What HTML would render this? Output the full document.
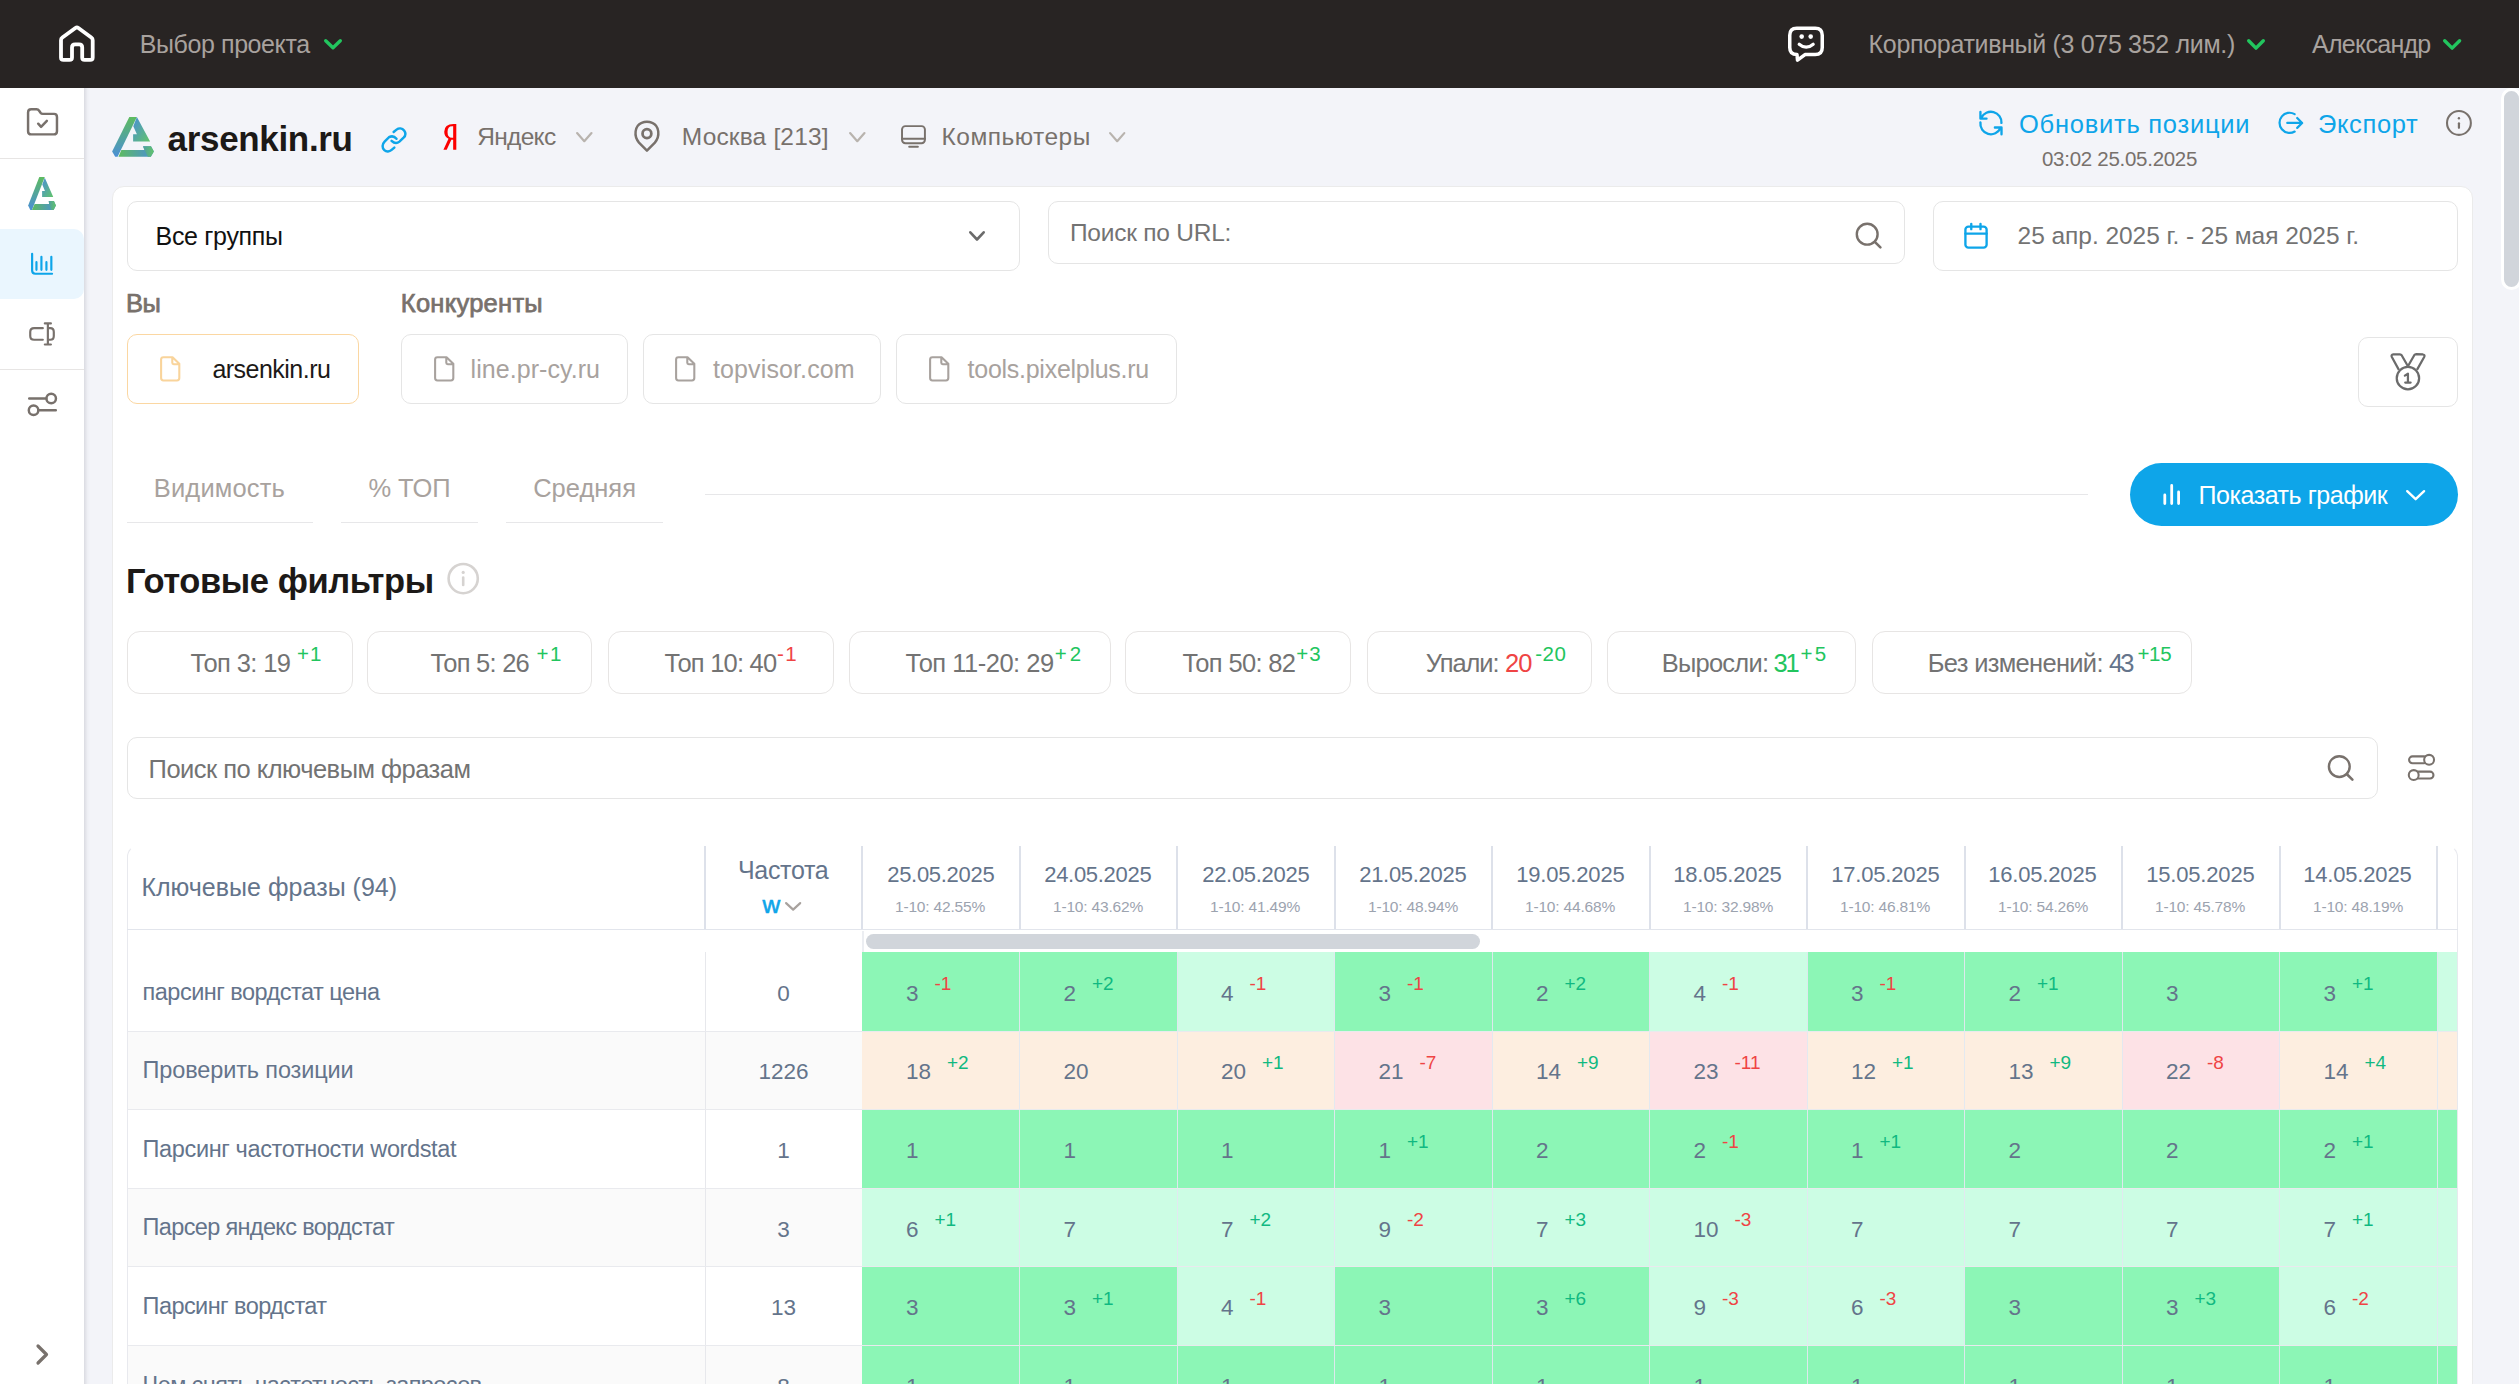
<!DOCTYPE html>
<html lang="ru"><head><meta charset="utf-8"><title>arsenkin.ru</title>
<style>
html,body{margin:0;padding:0;width:2519px;height:1384px;overflow:hidden;background:#f3f4f9}
body{position:relative;font-family:"Liberation Sans", sans-serif}
.t{position:absolute;white-space:pre;font-family:"Liberation Sans", sans-serif}
svg{overflow:visible}
</style></head><body>
<div style="position:absolute;left:0;top:0;width:2519px;height:1384px;overflow:hidden">
<div style="position:absolute;left:0px;top:0px;width:2519px;height:88px;background:#282423"></div>
<svg style="position:absolute;left:59px;top:25px;" width="36" height="37" viewBox="59 25 36 37"><path d="M72,57.5 V47.5 Q72,44.3 75.2,44.3 H79 Q82.2,44.3 82.2,47.5 V57.5 Q82.2,59.9 84.6,59.9 H90.2 Q92.7,59.9 92.7,57.4 V40.2 Q92.7,38.5 91.3,37.5 L78.4,28 Q76.9,27 75.4,28 L62.4,37.5 Q61,38.5 61,40.2 V57.4 Q61,59.9 63.5,59.9 H69.5 Q72,59.9 72,57.5 Z" fill="none" stroke="#fff" stroke-width="3.8" stroke-linejoin="round"/></svg>
<div id="tb_proj" class="t" style="left:139.80px;top:31.75px;font-size:25px;line-height:25px;color:#a8a29e;font-weight:400;letter-spacing:-0.417px;">Выбор проекта</div>
<svg style="position:absolute;left:322px;top:37px;" width="22" height="14.399999999999999" viewBox="322 37 22 14.399999999999999"><path d="M325.7,40.7 L333.0,47.699999999999996 L340.3,40.7" fill="none" stroke="#22c55e" stroke-width="3.4" stroke-linecap="round" stroke-linejoin="round"/></svg>
<svg style="position:absolute;left:1786px;top:24px;" width="40" height="40" viewBox="1786 24 40 40"><path d="M1797,54.6 Q1789.75,54.6 1789.75,47.6 V35.2 Q1789.75,28.2 1796.75,28.2 H1815.25 Q1822.25,28.2 1822.25,35.2 V47.6 Q1822.25,54.6 1815.25,54.6 H1805 L1797.5,60.2 Z" fill="none" stroke="#fff" stroke-width="3.5" stroke-linejoin="round"/><circle cx="1801.7" cy="36.6" r="2.3" fill="#fff"/><circle cx="1810.7" cy="36.6" r="2.3" fill="#fff"/><path d="M1799.2,44.2 Q1806.2,50.2 1813.2,44.2" fill="none" stroke="#fff" stroke-width="3.2" stroke-linecap="round"/></svg>
<div id="tb_corp" class="t" style="left:1868.60px;top:31.75px;font-size:25px;line-height:25px;color:#a8a29e;font-weight:400;letter-spacing:-0.322px;">Корпоративный (3 075 352 лим.)</div>
<svg style="position:absolute;left:2245px;top:36.6px;" width="22" height="14.799999999999997" viewBox="2245 36.6 22 14.799999999999997"><path d="M2248.7,40.300000000000004 L2256.0,47.699999999999996 L2263.3,40.300000000000004" fill="none" stroke="#22c55e" stroke-width="3.4" stroke-linecap="round" stroke-linejoin="round"/></svg>
<div id="tb_user" class="t" style="left:2312.00px;top:31.75px;font-size:25px;line-height:25px;color:#a8a29e;font-weight:400;letter-spacing:-0.734px;">Александр</div>
<svg style="position:absolute;left:2440.7px;top:36.6px;" width="22.300000000000182" height="14.799999999999997" viewBox="2440.7 36.6 22.300000000000182 14.799999999999997"><path d="M2444.3999999999996,40.300000000000004 L2451.85,47.699999999999996 L2459.3,40.300000000000004" fill="none" stroke="#22c55e" stroke-width="3.4" stroke-linecap="round" stroke-linejoin="round"/></svg>
<div style="position:absolute;left:0px;top:88px;width:2519px;height:1296px;background:#f3f4f9"></div>
<div style="position:absolute;left:84px;top:88px;width:6px;height:1296px;background:linear-gradient(to right, rgba(0,0,20,0.10), rgba(0,0,20,0.02) 60%, rgba(0,0,0,0))"></div>
<div style="position:absolute;left:0px;top:88px;width:84px;height:1296px;background:#fff"></div>
<div style="position:absolute;left:0px;top:158px;width:84px;height:1px;background:#e7e5e4"></div>
<div style="position:absolute;left:0px;top:369px;width:84px;height:1px;background:#e7e5e4"></div>
<div style="position:absolute;left:-10px;top:229px;width:94px;height:70px;background:#eaf6fe;border-radius:10px"></div>
<svg style="position:absolute;left:22px;top:100px;" width="40" height="40" viewBox="0 0 1384 1384"><path d="M210,430 Q210,320 320,320 H500 Q560,320 600,380 L640,440 Q670,480 720,480 H1110 Q1210,480 1210,590 V1080 Q1210,1190 1100,1190 H320 Q210,1190 210,1080 Z" fill="none" stroke="#78716c" stroke-width="85" stroke-linejoin="round"/><path d="M560,820 L660,930 L860,720" fill="none" stroke="#78716c" stroke-width="85" stroke-linecap="round" stroke-linejoin="round"/></svg>
<svg style="position:absolute;left:22px;top:170px;" width="40" height="46" viewBox="0 0 1203 1384"><defs>
<linearGradient id="sg1" x1="0" y1="0" x2="0" y2="1"><stop offset="0" stop-color="#5dbb5f"/><stop offset="1" stop-color="#4a8fd6"/></linearGradient>
<linearGradient id="sg2" x1="0" y1="0" x2="1" y2="1"><stop offset="0" stop-color="#4a8fd6"/><stop offset="1" stop-color="#62c46a"/></linearGradient>
<linearGradient id="sg3" x1="0" y1="0" x2="1" y2="0"><stop offset="0" stop-color="#5dbb5f"/><stop offset="1" stop-color="#4a8fd6"/></linearGradient>
<linearGradient id="sg4" x1="0" y1="0" x2="1" y2="0"><stop offset="0" stop-color="#4f9fa0"/><stop offset="1" stop-color="#62c46a"/></linearGradient>
</defs><path d="M520,210 L685,210 L300,1200 L250,1200 L185,1070 Z" fill="url(#sg1)"/><path d="M685,230 L940,810 L605,810 L605,635 L690,635 L610,440 Z" fill="url(#sg2)"/><path d="M380,1020 L815,1020 L805,935 L960,935 L1020,1070 L950,1200 L300,1200 Z" fill="url(#sg3)"/><path d="M815,1020 L805,935 L960,935 L1020,1070 L950,1200 L880,1200 Z" fill="url(#sg4)"/></svg>
<svg style="position:absolute;left:22px;top:244px;" width="40" height="40" viewBox="0 0 1384 1384"><path d="M350,340 V920 Q350,1030 460,1030 H1040" fill="none" stroke="#0ea5e9" stroke-width="75" stroke-linecap="round"/><path d="M500,630 V895 M672,440 V895 M845,630 V895 M1015,440 V895" fill="none" stroke="#0ea5e9" stroke-width="75" stroke-linecap="round"/></svg>
<svg style="position:absolute;left:22px;top:314px;" width="40" height="40" viewBox="0 0 1384 1384"><path d="M720,490 H420 Q285,490 285,620 V760 Q285,890 420,890 H720 M910,490 H980 Q1100,490 1100,620 V760 Q1100,890 980,890 H910 M790,325 H1000 M895,325 V1055 M790,1055 H1000" fill="none" stroke="#78716c" stroke-width="75" stroke-linecap="round"/></svg>
<svg style="position:absolute;left:22px;top:384px;" width="40" height="40" viewBox="0 0 1384 1384"><path d="M250,500 H840 M570,910 H1170" fill="none" stroke="#78716c" stroke-width="85" stroke-linecap="round"/><circle cx="1010" cy="500" r="165" fill="none" stroke="#78716c" stroke-width="85"/><circle cx="400" cy="910" r="165" fill="none" stroke="#78716c" stroke-width="85"/></svg>
<svg style="position:absolute;left:30px;top:1338px;" width="24" height="34" viewBox="30 1338 24 34"><path d="M38,1346 L46.5,1354.5 L38,1363" fill="none" stroke="#78716c" stroke-width="3.2" stroke-linecap="round" stroke-linejoin="round"/></svg>
<div style="position:absolute;left:2501px;top:88px;width:21px;height:202px;background:#d1d5db;border-radius:11px;border:3px solid #fff;box-sizing:border-box"></div>
<svg style="position:absolute;left:108px;top:112px;" width="50" height="50" viewBox="0 0 1384 1384"><defs>
<linearGradient id="hg1" x1="0" y1="0" x2="0" y2="1"><stop offset="0" stop-color="#5dbb5f"/><stop offset="1" stop-color="#4a8fd6"/></linearGradient>
<linearGradient id="hg2" x1="0" y1="0" x2="1" y2="1"><stop offset="0" stop-color="#4a8fd6"/><stop offset="1" stop-color="#62c46a"/></linearGradient>
<linearGradient id="hg3" x1="0" y1="0" x2="1" y2="0"><stop offset="0" stop-color="#5dbb5f"/><stop offset="1" stop-color="#4a8fd6"/></linearGradient>
<linearGradient id="hg4" x1="0" y1="0" x2="1" y2="0"><stop offset="0" stop-color="#4f9fa0"/><stop offset="1" stop-color="#62c46a"/></linearGradient>
</defs><path d="M590,135 L800,135 L265,1240 L200,1240 L115,1090 Z" fill="url(#hg1)"/><path d="M800,140 L1165,820 L695,820 L695,615 L800,615 L700,395 Z" fill="url(#hg2)"/><path d="M370,1050 L1010,1050 L970,945 L1190,945 L1270,1090 L1185,1240 L290,1240 Z" fill="url(#hg3)"/><path d="M1010,1050 L970,945 L1190,945 L1270,1090 L1185,1240 L1100,1240 Z" fill="url(#hg4)"/></svg>
<div id="h_site" class="t" style="left:167.60px;top:120.85px;font-size:35px;line-height:35px;color:#1c1917;font-weight:700;letter-spacing:-0.330px;">arsenkin.ru</div>
<svg style="position:absolute;left:376px;top:120px;" width="36" height="36" viewBox="0 0 1384 1384"><path d="M678,462 L790,370 C880,300 1010,310 1080,400 C1150,490 1140,600 1060,680 L900,830 C820,900 700,900 598,800 M788,720 C720,640 600,610 500,660 L330,830 C230,930 230,1080 320,1160 C400,1230 520,1220 600,1150 L705,1060" fill="none" stroke="#0ea5e9" stroke-width="95" stroke-linecap="round"/></svg>
<svg style="position:absolute;left:436px;top:118px;" width="30" height="38" viewBox="0 0 1093 1384"><path fill-rule="evenodd" d="M640,215 H740 V1160 H625 V790 H560 L390,1160 H270 L455,760 Q300,680 300,500 Q300,215 640,215 Z M625,300 H585 Q420,300 420,510 Q420,720 585,720 H625 Z" fill="#fc0000"/></svg>
<div id="h_yan" class="t" style="left:477.20px;top:124.98px;font-size:24.5px;line-height:24.5px;color:#78716c;font-weight:400;letter-spacing:-0.680px;">Яндекс</div>
<svg style="position:absolute;left:573.8px;top:130px;" width="20.600000000000023" height="14.300000000000011" viewBox="573.8 130 20.600000000000023 14.300000000000011"><path d="M576.9,133.1 L584.0999999999999,141.20000000000002 L591.3,133.1" fill="none" stroke="#b8b3ae" stroke-width="2.2" stroke-linecap="round" stroke-linejoin="round"/></svg>
<svg style="position:absolute;left:628px;top:116px;" width="40" height="40" viewBox="0 0 1384 1384"><path d="M655,1200 L380,920 C190,700 230,340 470,240 C590,185 720,185 840,240 C1080,340 1120,700 930,920 Z" fill="none" stroke="#78716c" stroke-width="85" stroke-linejoin="round"/><circle cx="655" cy="610" r="152" fill="none" stroke="#78716c" stroke-width="95"/></svg>
<div id="h_city" class="t" style="left:681.80px;top:124.98px;font-size:24.5px;line-height:24.5px;color:#78716c;font-weight:400;letter-spacing:0.161px;">Москва [213]</div>
<svg style="position:absolute;left:846.7px;top:130px;" width="20.59999999999991" height="14.300000000000011" viewBox="846.7 130 20.59999999999991 14.300000000000011"><path d="M849.8000000000001,133.1 L857.0,141.20000000000002 L864.1999999999999,133.1" fill="none" stroke="#b8b3ae" stroke-width="2.2" stroke-linecap="round" stroke-linejoin="round"/></svg>
<svg style="position:absolute;left:895px;top:116px;" width="36" height="36" viewBox="0 0 1384 1384"><rect x="270" y="390" width="880" height="655" rx="130" fill="none" stroke="#78716c" stroke-width="75"/><path d="M270,875 H1150 M545,1185 H880" fill="none" stroke="#78716c" stroke-width="75" stroke-linecap="round"/></svg>
<div id="h_dev" class="t" style="left:941.60px;top:124.98px;font-size:24.5px;line-height:24.5px;color:#78716c;font-weight:400;letter-spacing:0.478px;">Компьютеры</div>
<svg style="position:absolute;left:1106.8px;top:130px;" width="20.40000000000009" height="14.300000000000011" viewBox="1106.8 130 20.40000000000009 14.300000000000011"><path d="M1109.8999999999999,133.1 L1117.0,141.20000000000002 L1124.1000000000001,133.1" fill="none" stroke="#b8b3ae" stroke-width="2.2" stroke-linecap="round" stroke-linejoin="round"/></svg>
<svg style="position:absolute;left:1974px;top:106px;" width="34" height="34" viewBox="0 0 1384 1384"><path d="M1118,690 A430,430 0 0 0 300,480 M262,240 V512 H510 M262,670 A430,430 0 0 0 1080,900 M850,875 H1120 V1150" fill="none" stroke="#0ea5e9" stroke-width="95" stroke-linecap="round" stroke-linejoin="round"/></svg>
<div id="h_upd" class="t" style="left:2019.00px;top:111.92px;font-size:25.5px;line-height:25.5px;color:#0ea5e9;font-weight:400;letter-spacing:0.752px;">Обновить позиции</div>
<svg style="position:absolute;left:2274px;top:106px;" width="34" height="34" viewBox="0 0 1384 1384"><path d="M840,330 A410,410 0 1 0 840,1040 M540,690 H1140 M945,490 L1145,690 L945,890" fill="none" stroke="#0ea5e9" stroke-width="90" stroke-linecap="round" stroke-linejoin="round"/></svg>
<div id="h_exp" class="t" style="left:2318.00px;top:111.92px;font-size:25.5px;line-height:25.5px;color:#0ea5e9;font-weight:400;letter-spacing:0.651px;">Экспорт</div>
<svg style="position:absolute;left:2441px;top:106px;" width="34" height="34" viewBox="0 0 1384 1384"><circle cx="730" cy="690" r="485" fill="none" stroke="#78716c" stroke-width="85"/><circle cx="730" cy="500" r="48" fill="#78716c"/><path d="M730,705 V890" stroke="#78716c" stroke-width="90" stroke-linecap="round"/></svg>
<div id="h_time" class="t" style="left:2042.00px;top:149.38px;font-size:20.5px;line-height:20.5px;color:#78716c;font-weight:400;letter-spacing:-0.280px;">03:02 25.05.2025</div>
<div style="position:absolute;left:112px;top:186px;width:2361px;height:1314px;background:#fff;border:1.5px solid #ebebeb;border-radius:12px;box-sizing:border-box"></div>
<div style="position:absolute;left:127px;top:201px;width:893px;height:70px;border:1.5px solid #e5e5e5;border-radius:10px;box-sizing:border-box"></div>
<div id="c_groups" class="t" style="left:155.60px;top:224.15px;font-size:25px;line-height:25px;color:#111111;font-weight:400;letter-spacing:-0.324px;">Все группы</div>
<svg style="position:absolute;left:967px;top:229px;" width="20" height="13.800000000000011" viewBox="967 229 20 13.800000000000011"><path d="M970.3,232.3 L977.0,239.5 L983.7,232.3" fill="none" stroke="#6b6b6b" stroke-width="2.6" stroke-linecap="round" stroke-linejoin="round"/></svg>
<div style="position:absolute;left:1048px;top:201px;width:857px;height:63px;border:1.5px solid #e5e5e5;border-radius:10px;box-sizing:border-box"></div>
<div id="c_url" class="t" style="left:1070.00px;top:221.18px;font-size:24.5px;line-height:24.5px;color:#737373;font-weight:400;letter-spacing:-0.241px;">Поиск по URL:</div>
<svg style="position:absolute;left:1850px;top:218px;" width="36" height="36" viewBox="1850 218 36 36"><circle cx="1867.2" cy="234.2" r="10.4" fill="none" stroke="#78716c" stroke-width="2.4"/><path d="M1874.8,241.8 L1880.4,247.4" stroke="#78716c" stroke-width="2.6" stroke-linecap="round"/></svg>
<div style="position:absolute;left:1933px;top:201px;width:525px;height:70px;border:1.5px solid #e5e5e5;border-radius:10px;box-sizing:border-box"></div>
<svg style="position:absolute;left:1958px;top:218px;" width="36" height="36" viewBox="0 0 1384 1384"><rect x="285" y="330" width="815" height="810" rx="115" fill="none" stroke="#0ea5e9" stroke-width="90"/><path d="M285,600 H1100 M510,225 V430 M865,225 V430" fill="none" stroke="#0ea5e9" stroke-width="90" stroke-linecap="round"/></svg>
<div id="c_date" class="t" style="left:2017.60px;top:224.18px;font-size:24.5px;line-height:24.5px;color:#737373;font-weight:400;letter-spacing:-0.043px;">25 апр. 2025 г. - 25 мая 2025 г.</div>
<div id="c_you" class="t" style="left:126.00px;top:290.93px;font-size:25.5px;line-height:25.5px;color:#78716c;font-weight:400;letter-spacing:-0.600px;-webkit-text-stroke:0.75px #78716c">Вы</div>
<div id="c_comp" class="t" style="left:400.80px;top:290.93px;font-size:25.5px;line-height:25.5px;color:#78716c;font-weight:400;letter-spacing:0.267px;-webkit-text-stroke:0.75px #78716c">Конкуренты</div>
<div style="position:absolute;left:127px;top:334px;width:232px;height:70px;border:1.5px solid #fbd7a2;border-radius:10px;box-sizing:border-box"></div>
<svg style="position:absolute;left:152px;top:350px;" width="36" height="36" viewBox="0 0 1384 1384"><path d="M350,370 Q350,280 440,280 H790 L1050,530 V1080 Q1050,1170 960,1170 H440 Q350,1170 350,1080 Z M780,290 V490 Q780,545 835,545 H1040" fill="none" stroke="#f9d49b" stroke-width="80" stroke-linejoin="round"/></svg>
<div id="c_chip0" class="t" style="left:212.40px;top:356.55px;font-size:25px;line-height:25px;color:#1c1917;font-weight:400;letter-spacing:-0.520px;">arsenkin.ru</div>
<div style="position:absolute;left:401px;top:334px;width:227px;height:70px;border:1.5px solid #e5e5e5;border-radius:10px;box-sizing:border-box"></div>
<svg style="position:absolute;left:426px;top:350px;" width="36" height="36" viewBox="0 0 1384 1384"><path d="M350,370 Q350,280 440,280 H790 L1050,530 V1080 Q1050,1170 960,1170 H440 Q350,1170 350,1080 Z M780,290 V490 Q780,545 835,545 H1040" fill="none" stroke="#a8a29e" stroke-width="80" stroke-linejoin="round"/></svg>
<div id="c_chip1" class="t" style="left:470.60px;top:356.55px;font-size:25px;line-height:25px;color:#a8a29e;font-weight:400;letter-spacing:0.049px;">line.pr-cy.ru</div>
<div style="position:absolute;left:642.6px;top:334px;width:238.69999999999993px;height:70px;border:1.5px solid #e5e5e5;border-radius:10px;box-sizing:border-box"></div>
<svg style="position:absolute;left:667.3px;top:350px;" width="36" height="36" viewBox="0 0 1384 1384"><path d="M350,370 Q350,280 440,280 H790 L1050,530 V1080 Q1050,1170 960,1170 H440 Q350,1170 350,1080 Z M780,290 V490 Q780,545 835,545 H1040" fill="none" stroke="#a8a29e" stroke-width="80" stroke-linejoin="round"/></svg>
<div id="c_chip2" class="t" style="left:713.00px;top:356.55px;font-size:25px;line-height:25px;color:#a8a29e;font-weight:400;letter-spacing:0.119px;">topvisor.com</div>
<div style="position:absolute;left:896.3px;top:334px;width:281.0px;height:70px;border:1.5px solid #e5e5e5;border-radius:10px;box-sizing:border-box"></div>
<svg style="position:absolute;left:921.3px;top:350px;" width="36" height="36" viewBox="0 0 1384 1384"><path d="M350,370 Q350,280 440,280 H790 L1050,530 V1080 Q1050,1170 960,1170 H440 Q350,1170 350,1080 Z M780,290 V490 Q780,545 835,545 H1040" fill="none" stroke="#a8a29e" stroke-width="80" stroke-linejoin="round"/></svg>
<div id="c_chip3" class="t" style="left:967.60px;top:356.55px;font-size:25px;line-height:25px;color:#a8a29e;font-weight:400;letter-spacing:-0.270px;">tools.pixelplus.ru</div>
<div style="position:absolute;left:2358px;top:337px;width:100px;height:70px;border:1.5px solid #e5e5e5;border-radius:10px;box-sizing:border-box"></div>
<svg style="position:absolute;left:2383px;top:346px;" width="50" height="50" viewBox="0 0 1384 1384"><circle cx="690" cy="890" r="310" fill="none" stroke="#6b6b6b" stroke-width="62"/><path d="M440,660 L245,305 Q215,240 285,235 L470,230 Q500,230 520,262 L690,560 L865,255 Q885,225 920,225 L1105,235 Q1170,245 1140,305 L940,660" fill="none" stroke="#6b6b6b" stroke-width="62" stroke-linejoin="round"/><path d="M605,820 L690,765 V1010 M615,1012 H765" fill="none" stroke="#6b6b6b" stroke-width="62" stroke-linecap="round" stroke-linejoin="round"/></svg>
<div id="tab0" class="t" style="left:153.80px;top:475.52px;font-size:25.5px;line-height:25.5px;color:#a8a29e;font-weight:400;letter-spacing:0.150px;">Видимость</div>
<div id="tab1" class="t" style="left:368.40px;top:475.52px;font-size:25.5px;line-height:25.5px;color:#a8a29e;font-weight:400;letter-spacing:-0.050px;">% ТОП</div>
<div id="tab2" class="t" style="left:533.20px;top:475.52px;font-size:25.5px;line-height:25.5px;color:#a8a29e;font-weight:400;letter-spacing:0.000px;">Средняя</div>
<div style="position:absolute;left:127px;top:521.5px;width:186px;height:1.5px;background:#e7e7e9"></div>
<div style="position:absolute;left:341px;top:521.5px;width:137px;height:1.5px;background:#e7e7e9"></div>
<div style="position:absolute;left:506px;top:521.5px;width:157px;height:1.5px;background:#e7e7e9"></div>
<div style="position:absolute;left:705px;top:493.5px;width:1383px;height:1.5px;background:#e7e7e9"></div>
<div style="position:absolute;left:2130px;top:463px;width:328px;height:63px;background:#0ea5e9;border-radius:32px"></div>
<svg style="position:absolute;left:2158px;top:478px;" width="28" height="32" viewBox="2158 478 28 32"><path d="M2164.8,495 V503.5 M2171.7,485.5 V503.5 M2178.6,492 V503.5" stroke="#fff" stroke-width="2.8" stroke-linecap="round"/></svg>
<div id="btn_chart" class="t" style="left:2198.60px;top:482.75px;font-size:25px;line-height:25px;color:#ffffff;font-weight:400;letter-spacing:-0.464px;">Показать график</div>
<svg style="position:absolute;left:2404px;top:487.6px;" width="23.300000000000182" height="14.399999999999977" viewBox="2404 487.6 23.300000000000182 14.399999999999977"><path d="M2407.2,490.8 L2415.65,498.8 L2424.1000000000004,490.8" fill="none" stroke="#ffffff" stroke-width="2.4" stroke-linecap="round" stroke-linejoin="round"/></svg>
<div id="h_filters" class="t" style="left:126.00px;top:563.67px;font-size:34.5px;line-height:34.5px;color:#1c1917;font-weight:700;letter-spacing:-0.407px;">Готовые фильтры</div>
<svg style="position:absolute;left:442px;top:558px;" width="42" height="42" viewBox="442 558 42 42"><circle cx="463.2" cy="578.6" r="14.6" fill="none" stroke="#d6d3d1" stroke-width="2.6"/><circle cx="463.2" cy="572.4" r="1.6" fill="#d6d3d1"/><path d="M463.2,577.5 V585" stroke="#d6d3d1" stroke-width="2.6" stroke-linecap="round"/></svg>
<div style="position:absolute;left:127px;top:631px;width:225.5px;height:63px;border:1.5px solid #e7e5e4;border-radius:13px;box-sizing:border-box"></div>
<div style="position:absolute;left:367.4px;top:631px;width:224.80000000000007px;height:63px;border:1.5px solid #e7e5e4;border-radius:13px;box-sizing:border-box"></div>
<div style="position:absolute;left:607.5px;top:631px;width:226.10000000000002px;height:63px;border:1.5px solid #e7e5e4;border-radius:13px;box-sizing:border-box"></div>
<div style="position:absolute;left:848.5px;top:631px;width:262.20000000000005px;height:63px;border:1.5px solid #e7e5e4;border-radius:13px;box-sizing:border-box"></div>
<div style="position:absolute;left:1125.3px;top:631px;width:226.10000000000014px;height:63px;border:1.5px solid #e7e5e4;border-radius:13px;box-sizing:border-box"></div>
<div style="position:absolute;left:1366.5px;top:631px;width:225.29999999999995px;height:63px;border:1.5px solid #e7e5e4;border-radius:13px;box-sizing:border-box"></div>
<div style="position:absolute;left:1606.6px;top:631px;width:249.9000000000001px;height:63px;border:1.5px solid #e7e5e4;border-radius:13px;box-sizing:border-box"></div>
<div style="position:absolute;left:1871.8px;top:631px;width:320.29999999999995px;height:63px;border:1.5px solid #e7e5e4;border-radius:13px;box-sizing:border-box"></div>
<div id="f0" class="t" style="left:190.60px;top:650.62px;font-size:25.5px;line-height:25.5px;color:#737373;font-weight:400;letter-spacing:-0.625px;">Топ 3: 19</div>
<div id="f0s" class="t" style="left:297.00px;top:643.78px;font-size:20.5px;line-height:20.5px;color:#22c55e;font-weight:400;letter-spacing:1.000px;">+1</div>
<div id="f1" class="t" style="left:430.40px;top:650.62px;font-size:25.5px;line-height:25.5px;color:#737373;font-weight:400;letter-spacing:-0.750px;">Топ 5: 26</div>
<div id="f1s" class="t" style="left:536.60px;top:643.78px;font-size:20.5px;line-height:20.5px;color:#22c55e;font-weight:400;letter-spacing:1.500px;">+1</div>
<div id="f2" class="t" style="left:664.60px;top:650.62px;font-size:25.5px;line-height:25.5px;color:#737373;font-weight:400;letter-spacing:-0.777px;">Топ 10: 40</div>
<div id="f2s" class="t" style="left:777.00px;top:643.78px;font-size:20.5px;line-height:20.5px;color:#ef4444;font-weight:400;letter-spacing:1.500px;">-1</div>
<div id="f3" class="t" style="left:905.60px;top:650.62px;font-size:25.5px;line-height:25.5px;color:#737373;font-weight:400;letter-spacing:-0.499px;">Топ 11-20: 29</div>
<div id="f3s" class="t" style="left:1054.80px;top:643.78px;font-size:20.5px;line-height:20.5px;color:#22c55e;font-weight:400;letter-spacing:3.000px;">+2</div>
<div id="f4" class="t" style="left:1182.40px;top:650.62px;font-size:25.5px;line-height:25.5px;color:#737373;font-weight:400;letter-spacing:-0.667px;">Топ 50: 82</div>
<div id="f4s" class="t" style="left:1296.20px;top:643.78px;font-size:20.5px;line-height:20.5px;color:#22c55e;font-weight:400;letter-spacing:1.000px;">+3</div>
<div id="f5" class="t" style="left:1425.80px;top:650.62px;font-size:25.5px;line-height:25.5px;color:#737373;font-weight:400;letter-spacing:-1.100px;">Упали:</div>
<div id="f5n" class="t" style="left:1505.00px;top:650.62px;font-size:25.5px;line-height:25.5px;color:#ef4444;font-weight:400;letter-spacing:-1.000px;">20</div>
<div id="f5s" class="t" style="left:1535.20px;top:643.78px;font-size:20.5px;line-height:20.5px;color:#22c55e;font-weight:400;letter-spacing:0.500px;">-20</div>
<div id="f6" class="t" style="left:1661.80px;top:650.62px;font-size:25.5px;line-height:25.5px;color:#737373;font-weight:400;letter-spacing:-0.785px;">Выросли:</div>
<div id="f6n" class="t" style="left:1773.40px;top:650.62px;font-size:25.5px;line-height:25.5px;color:#22c55e;font-weight:400;letter-spacing:-2.000px;">31</div>
<div id="f6s" class="t" style="left:1800.40px;top:643.78px;font-size:20.5px;line-height:20.5px;color:#22c55e;font-weight:400;letter-spacing:2.500px;">+5</div>
<div id="f7" class="t" style="left:1927.80px;top:650.62px;font-size:25.5px;line-height:25.5px;color:#737373;font-weight:400;letter-spacing:-0.693px;">Без изменений:</div>
<div id="f7n" class="t" style="left:2109.00px;top:650.62px;font-size:25.5px;line-height:25.5px;color:#64748b;font-weight:400;letter-spacing:-3.000px;">43</div>
<div id="f7s" class="t" style="left:2137.40px;top:643.78px;font-size:20.5px;line-height:20.5px;color:#22c55e;font-weight:400;letter-spacing:-0.250px;">+15</div>
<div style="position:absolute;left:127px;top:736.5px;width:2250.5px;height:62.5px;border:1.5px solid #e5e5e5;border-radius:10px;box-sizing:border-box"></div>
<div id="kw_search" class="t" style="left:148.60px;top:756.83px;font-size:25.5px;line-height:25.5px;color:#737373;font-weight:400;letter-spacing:-0.511px;">Поиск по ключевым фразам</div>
<svg style="position:absolute;left:2322px;top:750px;" width="36" height="36" viewBox="2322 750 36 36"><circle cx="2339.3" cy="766.6" r="10.4" fill="none" stroke="#78716c" stroke-width="2.4"/><path d="M2346.9,774.2 L2352.4,779.6" stroke="#78716c" stroke-width="2.6" stroke-linecap="round"/></svg>
<svg style="position:absolute;left:2400px;top:748px;" width="42" height="38" viewBox="0 0 1530 1384"><rect x="330" y="305" width="660" height="250" rx="125" fill="none" stroke="#78716c" stroke-width="75"/><circle cx="1060" cy="430" r="180" fill="#fff" stroke="#78716c" stroke-width="75"/><rect x="540" y="860" width="680" height="250" rx="125" fill="none" stroke="#78716c" stroke-width="75"/><circle cx="500" cy="985" r="180" fill="#fff" stroke="#78716c" stroke-width="75"/></svg>
<div style="position:absolute;left:126.75px;top:845px;width:2331.25px;height:655px;background:#fff;border:1.5px solid #e8e9ee;border-top-color:transparent;border-radius:12px;box-sizing:border-box"></div>
<div style="position:absolute;left:704px;top:846px;width:2px;height:83px;background:#dde1ea"></div>
<div style="position:absolute;left:861.0px;top:846px;width:2.0px;height:83px;background:#dde1ea"></div>
<div style="position:absolute;left:1018.5px;top:846px;width:2.0px;height:83px;background:#dde1ea"></div>
<div style="position:absolute;left:1176.0px;top:846px;width:2.0px;height:83px;background:#dde1ea"></div>
<div style="position:absolute;left:1333.5px;top:846px;width:2.0px;height:83px;background:#dde1ea"></div>
<div style="position:absolute;left:1491.0px;top:846px;width:2.0px;height:83px;background:#dde1ea"></div>
<div style="position:absolute;left:1648.5px;top:846px;width:2.0px;height:83px;background:#dde1ea"></div>
<div style="position:absolute;left:1806.0px;top:846px;width:2.0px;height:83px;background:#dde1ea"></div>
<div style="position:absolute;left:1963.5px;top:846px;width:2.0px;height:83px;background:#dde1ea"></div>
<div style="position:absolute;left:2121.0px;top:846px;width:2.0px;height:83px;background:#dde1ea"></div>
<div style="position:absolute;left:2278.5px;top:846px;width:2.0px;height:83px;background:#dde1ea"></div>
<div style="position:absolute;left:2436.0px;top:846px;width:2.0px;height:83px;background:#dde1ea"></div>
<div style="position:absolute;left:2436px;top:846px;width:2px;height:83px;background:#dde1ea"></div>
<div style="position:absolute;left:126.75px;top:929px;width:2331.25px;height:1px;background:#e2e5ec"></div>
<div id="th_kw" class="t" style="left:141.40px;top:875.45px;font-size:25px;line-height:25px;color:#64748b;font-weight:400;letter-spacing:0.023px;">Ключевые фразы (94)</div>
<div id="th_freq" class="t" style="left:738.00px;top:857.75px;font-size:25px;line-height:25px;color:#64748b;font-weight:400;letter-spacing:-0.333px;">Частота</div>
<div id="th_w" class="t" style="left:762.60px;top:892.88px;font-size:24.5px;line-height:24.5px;color:#0ea5e9;font-weight:400;letter-spacing:0.000px;-webkit-text-stroke:0.6px #0ea5e9">w</div>
<svg style="position:absolute;left:782.7px;top:899.8px;" width="20.299999999999955" height="12.700000000000045" viewBox="782.7 899.8 20.299999999999955 12.700000000000045"><path d="M785.8000000000001,902.9 L792.85,909.4 L799.9,902.9" fill="none" stroke="#a8a29e" stroke-width="2.2" stroke-linecap="round" stroke-linejoin="round"/></svg>
<div id="th_d0" class="t" style="left:887.20px;top:863.50px;font-size:22px;line-height:22px;color:#64748b;font-weight:400;letter-spacing:-0.290px;width:auto">25.05.2025</div>
<div id="th_p0" class="t" style="left:895.00px;top:898.83px;font-size:15.5px;line-height:15.5px;color:#9ca3af;font-weight:400;letter-spacing:-0.182px;">1-10: 42.55%</div>
<div id="th_d1" class="t" style="left:1044.20px;top:863.50px;font-size:22px;line-height:22px;color:#64748b;font-weight:400;letter-spacing:-0.290px;width:auto">24.05.2025</div>
<div id="th_p1" class="t" style="left:1053.00px;top:898.83px;font-size:15.5px;line-height:15.5px;color:#9ca3af;font-weight:400;letter-spacing:-0.182px;">1-10: 43.62%</div>
<div id="th_d2" class="t" style="left:1202.20px;top:863.50px;font-size:22px;line-height:22px;color:#64748b;font-weight:400;letter-spacing:-0.290px;width:auto">22.05.2025</div>
<div id="th_p2" class="t" style="left:1210.00px;top:898.83px;font-size:15.5px;line-height:15.5px;color:#9ca3af;font-weight:400;letter-spacing:-0.182px;">1-10: 41.49%</div>
<div id="th_d3" class="t" style="left:1359.20px;top:863.50px;font-size:22px;line-height:22px;color:#64748b;font-weight:400;letter-spacing:-0.290px;width:auto">21.05.2025</div>
<div id="th_p3" class="t" style="left:1368.00px;top:898.83px;font-size:15.5px;line-height:15.5px;color:#9ca3af;font-weight:400;letter-spacing:-0.182px;">1-10: 48.94%</div>
<div id="th_d4" class="t" style="left:1516.20px;top:863.50px;font-size:22px;line-height:22px;color:#64748b;font-weight:400;letter-spacing:-0.179px;width:auto">19.05.2025</div>
<div id="th_p4" class="t" style="left:1525.00px;top:898.83px;font-size:15.5px;line-height:15.5px;color:#9ca3af;font-weight:400;letter-spacing:-0.182px;">1-10: 44.68%</div>
<div id="th_d5" class="t" style="left:1673.20px;top:863.50px;font-size:22px;line-height:22px;color:#64748b;font-weight:400;letter-spacing:-0.179px;width:auto">18.05.2025</div>
<div id="th_p5" class="t" style="left:1683.00px;top:898.83px;font-size:15.5px;line-height:15.5px;color:#9ca3af;font-weight:400;letter-spacing:-0.182px;">1-10: 32.98%</div>
<div id="th_d6" class="t" style="left:1831.20px;top:863.50px;font-size:22px;line-height:22px;color:#64748b;font-weight:400;letter-spacing:-0.179px;width:auto">17.05.2025</div>
<div id="th_p6" class="t" style="left:1840.00px;top:898.83px;font-size:15.5px;line-height:15.5px;color:#9ca3af;font-weight:400;letter-spacing:-0.182px;">1-10: 46.81%</div>
<div id="th_d7" class="t" style="left:1988.20px;top:863.50px;font-size:22px;line-height:22px;color:#64748b;font-weight:400;letter-spacing:-0.179px;width:auto">16.05.2025</div>
<div id="th_p7" class="t" style="left:1998.00px;top:898.83px;font-size:15.5px;line-height:15.5px;color:#9ca3af;font-weight:400;letter-spacing:-0.182px;">1-10: 54.26%</div>
<div id="th_d8" class="t" style="left:2146.20px;top:863.50px;font-size:22px;line-height:22px;color:#64748b;font-weight:400;letter-spacing:-0.179px;width:auto">15.05.2025</div>
<div id="th_p8" class="t" style="left:2155.00px;top:898.83px;font-size:15.5px;line-height:15.5px;color:#9ca3af;font-weight:400;letter-spacing:-0.182px;">1-10: 45.78%</div>
<div id="th_d9" class="t" style="left:2303.20px;top:863.50px;font-size:22px;line-height:22px;color:#64748b;font-weight:400;letter-spacing:-0.179px;width:auto">14.05.2025</div>
<div id="th_p9" class="t" style="left:2313.00px;top:898.83px;font-size:15.5px;line-height:15.5px;color:#9ca3af;font-weight:400;letter-spacing:-0.182px;">1-10: 48.19%</div>
<div style="position:absolute;left:862px;top:930.5px;width:1.5px;height:21.5px;background:#eceef2"></div>
<div style="position:absolute;left:866px;top:934px;width:614px;height:15px;background:#d1d5db;border-radius:8px"></div>
<div style="position:absolute;left:128.25px;top:952.0px;width:733.75px;height:78.59999999999991px;background:#ffffff"></div>
<div style="position:absolute;left:705px;top:952.0px;width:1px;height:78.59999999999991px;background:#e7e8ec"></div>
<div style="position:absolute;left:862.0px;top:952.0px;width:157.5px;height:78.59999999999991px;background:#8cf6b6"></div>
<div style="position:absolute;left:1019.5px;top:952.0px;width:157.5px;height:78.59999999999991px;background:#8cf6b6"></div>
<div style="position:absolute;left:1177.0px;top:952.0px;width:157.5px;height:78.59999999999991px;background:#ccfde4"></div>
<div style="position:absolute;left:1334.5px;top:952.0px;width:157.5px;height:78.59999999999991px;background:#8cf6b6"></div>
<div style="position:absolute;left:1492.0px;top:952.0px;width:157.5px;height:78.59999999999991px;background:#8cf6b6"></div>
<div style="position:absolute;left:1649.5px;top:952.0px;width:157.5px;height:78.59999999999991px;background:#ccfde4"></div>
<div style="position:absolute;left:1807.0px;top:952.0px;width:157.5px;height:78.59999999999991px;background:#8cf6b6"></div>
<div style="position:absolute;left:1964.5px;top:952.0px;width:157.5px;height:78.59999999999991px;background:#8cf6b6"></div>
<div style="position:absolute;left:2122.0px;top:952.0px;width:157.5px;height:78.59999999999991px;background:#8cf6b6"></div>
<div style="position:absolute;left:2279.5px;top:952.0px;width:157.5px;height:78.59999999999991px;background:#8cf6b6"></div>
<div style="position:absolute;left:2437px;top:952.0px;width:19.5px;height:78.59999999999991px;background:#ccfde4"></div>
<div style="position:absolute;left:1019px;top:952.0px;width:1px;height:78.59999999999991px;background:rgba(226,232,240,0.95)"></div>
<div style="position:absolute;left:1177px;top:952.0px;width:1px;height:78.59999999999991px;background:rgba(226,232,240,0.95)"></div>
<div style="position:absolute;left:1334px;top:952.0px;width:1px;height:78.59999999999991px;background:rgba(226,232,240,0.95)"></div>
<div style="position:absolute;left:1492px;top:952.0px;width:1px;height:78.59999999999991px;background:rgba(226,232,240,0.95)"></div>
<div style="position:absolute;left:1649px;top:952.0px;width:1px;height:78.59999999999991px;background:rgba(226,232,240,0.95)"></div>
<div style="position:absolute;left:1807px;top:952.0px;width:1px;height:78.59999999999991px;background:rgba(226,232,240,0.95)"></div>
<div style="position:absolute;left:1964px;top:952.0px;width:1px;height:78.59999999999991px;background:rgba(226,232,240,0.95)"></div>
<div style="position:absolute;left:2122px;top:952.0px;width:1px;height:78.59999999999991px;background:rgba(226,232,240,0.95)"></div>
<div style="position:absolute;left:2279px;top:952.0px;width:1px;height:78.59999999999991px;background:rgba(226,232,240,0.95)"></div>
<div style="position:absolute;left:2437px;top:952.0px;width:1px;height:78.59999999999991px;background:rgba(226,232,240,0.95)"></div>
<div id="kw0" class="t" style="left:142.60px;top:980.52px;font-size:23.5px;line-height:23.5px;color:#64748b;font-weight:400;letter-spacing:-0.510px;">парсинг вордстат цена</div>
<div class="t" style="left:705px;width:157px;text-align:center;top:982.88px;font-size:22.5px;line-height:22.5px;color:#64748b">0</div>
<div class="t" style="left:906.00px;top:982.88px;font-size:22.5px;line-height:22.5px;color:#64748b">3<span style="font-size:19px;color:#ef4444;position:relative;top:-10.5px;margin-left:15.9px">-1</span></div>
<div class="t" style="left:1063.50px;top:982.88px;font-size:22.5px;line-height:22.5px;color:#64748b">2<span style="font-size:19px;color:#10b981;position:relative;top:-10.5px;margin-left:15.9px">+2</span></div>
<div class="t" style="left:1221.00px;top:982.88px;font-size:22.5px;line-height:22.5px;color:#64748b">4<span style="font-size:19px;color:#ef4444;position:relative;top:-10.5px;margin-left:15.9px">-1</span></div>
<div class="t" style="left:1378.50px;top:982.88px;font-size:22.5px;line-height:22.5px;color:#64748b">3<span style="font-size:19px;color:#ef4444;position:relative;top:-10.5px;margin-left:15.9px">-1</span></div>
<div class="t" style="left:1536.00px;top:982.88px;font-size:22.5px;line-height:22.5px;color:#64748b">2<span style="font-size:19px;color:#10b981;position:relative;top:-10.5px;margin-left:15.9px">+2</span></div>
<div class="t" style="left:1693.50px;top:982.88px;font-size:22.5px;line-height:22.5px;color:#64748b">4<span style="font-size:19px;color:#ef4444;position:relative;top:-10.5px;margin-left:15.9px">-1</span></div>
<div class="t" style="left:1851.00px;top:982.88px;font-size:22.5px;line-height:22.5px;color:#64748b">3<span style="font-size:19px;color:#ef4444;position:relative;top:-10.5px;margin-left:15.9px">-1</span></div>
<div class="t" style="left:2008.50px;top:982.88px;font-size:22.5px;line-height:22.5px;color:#64748b">2<span style="font-size:19px;color:#10b981;position:relative;top:-10.5px;margin-left:15.9px">+1</span></div>
<div class="t" style="left:2166.00px;top:982.88px;font-size:22.5px;line-height:22.5px;color:#64748b">3</div>
<div class="t" style="left:2323.50px;top:982.88px;font-size:22.5px;line-height:22.5px;color:#64748b">3<span style="font-size:19px;color:#10b981;position:relative;top:-10.5px;margin-left:15.9px">+1</span></div>
<div style="position:absolute;left:128.25px;top:1030.6px;width:733.75px;height:78.59999999999991px;background:#fafafa"></div>
<div style="position:absolute;left:705px;top:1030.6px;width:1px;height:78.59999999999991px;background:#e7e8ec"></div>
<div style="position:absolute;left:862.0px;top:1030.6px;width:157.5px;height:78.59999999999991px;background:#fdeee0"></div>
<div style="position:absolute;left:1019.5px;top:1030.6px;width:157.5px;height:78.59999999999991px;background:#fdeee0"></div>
<div style="position:absolute;left:1177.0px;top:1030.6px;width:157.5px;height:78.59999999999991px;background:#fdeee0"></div>
<div style="position:absolute;left:1334.5px;top:1030.6px;width:157.5px;height:78.59999999999991px;background:#fde2e6"></div>
<div style="position:absolute;left:1492.0px;top:1030.6px;width:157.5px;height:78.59999999999991px;background:#fdeee0"></div>
<div style="position:absolute;left:1649.5px;top:1030.6px;width:157.5px;height:78.59999999999991px;background:#fde2e6"></div>
<div style="position:absolute;left:1807.0px;top:1030.6px;width:157.5px;height:78.59999999999991px;background:#fdeee0"></div>
<div style="position:absolute;left:1964.5px;top:1030.6px;width:157.5px;height:78.59999999999991px;background:#fdeee0"></div>
<div style="position:absolute;left:2122.0px;top:1030.6px;width:157.5px;height:78.59999999999991px;background:#fde2e6"></div>
<div style="position:absolute;left:2279.5px;top:1030.6px;width:157.5px;height:78.59999999999991px;background:#fdeee0"></div>
<div style="position:absolute;left:2437px;top:1030.6px;width:19.5px;height:78.59999999999991px;background:#fdeee0"></div>
<div style="position:absolute;left:1019px;top:1030.6px;width:1px;height:78.59999999999991px;background:rgba(226,232,240,0.95)"></div>
<div style="position:absolute;left:1177px;top:1030.6px;width:1px;height:78.59999999999991px;background:rgba(226,232,240,0.95)"></div>
<div style="position:absolute;left:1334px;top:1030.6px;width:1px;height:78.59999999999991px;background:rgba(226,232,240,0.95)"></div>
<div style="position:absolute;left:1492px;top:1030.6px;width:1px;height:78.59999999999991px;background:rgba(226,232,240,0.95)"></div>
<div style="position:absolute;left:1649px;top:1030.6px;width:1px;height:78.59999999999991px;background:rgba(226,232,240,0.95)"></div>
<div style="position:absolute;left:1807px;top:1030.6px;width:1px;height:78.59999999999991px;background:rgba(226,232,240,0.95)"></div>
<div style="position:absolute;left:1964px;top:1030.6px;width:1px;height:78.59999999999991px;background:rgba(226,232,240,0.95)"></div>
<div style="position:absolute;left:2122px;top:1030.6px;width:1px;height:78.59999999999991px;background:rgba(226,232,240,0.95)"></div>
<div style="position:absolute;left:2279px;top:1030.6px;width:1px;height:78.59999999999991px;background:rgba(226,232,240,0.95)"></div>
<div style="position:absolute;left:2437px;top:1030.6px;width:1px;height:78.59999999999991px;background:rgba(226,232,240,0.95)"></div>
<div style="position:absolute;left:128.25px;top:1031px;width:2328.25px;height:1px;background:#e9eaee"></div>
<div id="kw1" class="t" style="left:142.60px;top:1059.12px;font-size:23.5px;line-height:23.5px;color:#64748b;font-weight:400;letter-spacing:-0.136px;">Проверить позиции</div>
<div class="t" style="left:705px;width:157px;text-align:center;top:1061.47px;font-size:22.5px;line-height:22.5px;color:#64748b">1226</div>
<div class="t" style="left:906.00px;top:1061.47px;font-size:22.5px;line-height:22.5px;color:#64748b">18<span style="font-size:19px;color:#10b981;position:relative;top:-10.5px;margin-left:15.9px">+2</span></div>
<div class="t" style="left:1063.50px;top:1061.47px;font-size:22.5px;line-height:22.5px;color:#64748b">20</div>
<div class="t" style="left:1221.00px;top:1061.47px;font-size:22.5px;line-height:22.5px;color:#64748b">20<span style="font-size:19px;color:#10b981;position:relative;top:-10.5px;margin-left:15.9px">+1</span></div>
<div class="t" style="left:1378.50px;top:1061.47px;font-size:22.5px;line-height:22.5px;color:#64748b">21<span style="font-size:19px;color:#ef4444;position:relative;top:-10.5px;margin-left:15.9px">-7</span></div>
<div class="t" style="left:1536.00px;top:1061.47px;font-size:22.5px;line-height:22.5px;color:#64748b">14<span style="font-size:19px;color:#10b981;position:relative;top:-10.5px;margin-left:15.9px">+9</span></div>
<div class="t" style="left:1693.50px;top:1061.47px;font-size:22.5px;line-height:22.5px;color:#64748b">23<span style="font-size:19px;color:#ef4444;position:relative;top:-10.5px;margin-left:15.9px">-11</span></div>
<div class="t" style="left:1851.00px;top:1061.47px;font-size:22.5px;line-height:22.5px;color:#64748b">12<span style="font-size:19px;color:#10b981;position:relative;top:-10.5px;margin-left:15.9px">+1</span></div>
<div class="t" style="left:2008.50px;top:1061.47px;font-size:22.5px;line-height:22.5px;color:#64748b">13<span style="font-size:19px;color:#10b981;position:relative;top:-10.5px;margin-left:15.9px">+9</span></div>
<div class="t" style="left:2166.00px;top:1061.47px;font-size:22.5px;line-height:22.5px;color:#64748b">22<span style="font-size:19px;color:#ef4444;position:relative;top:-10.5px;margin-left:15.9px">-8</span></div>
<div class="t" style="left:2323.50px;top:1061.47px;font-size:22.5px;line-height:22.5px;color:#64748b">14<span style="font-size:19px;color:#10b981;position:relative;top:-10.5px;margin-left:15.9px">+4</span></div>
<div style="position:absolute;left:128.25px;top:1109.2px;width:733.75px;height:78.59999999999991px;background:#ffffff"></div>
<div style="position:absolute;left:705px;top:1109.2px;width:1px;height:78.59999999999991px;background:#e7e8ec"></div>
<div style="position:absolute;left:862.0px;top:1109.2px;width:157.5px;height:78.59999999999991px;background:#8cf6b6"></div>
<div style="position:absolute;left:1019.5px;top:1109.2px;width:157.5px;height:78.59999999999991px;background:#8cf6b6"></div>
<div style="position:absolute;left:1177.0px;top:1109.2px;width:157.5px;height:78.59999999999991px;background:#8cf6b6"></div>
<div style="position:absolute;left:1334.5px;top:1109.2px;width:157.5px;height:78.59999999999991px;background:#8cf6b6"></div>
<div style="position:absolute;left:1492.0px;top:1109.2px;width:157.5px;height:78.59999999999991px;background:#8cf6b6"></div>
<div style="position:absolute;left:1649.5px;top:1109.2px;width:157.5px;height:78.59999999999991px;background:#8cf6b6"></div>
<div style="position:absolute;left:1807.0px;top:1109.2px;width:157.5px;height:78.59999999999991px;background:#8cf6b6"></div>
<div style="position:absolute;left:1964.5px;top:1109.2px;width:157.5px;height:78.59999999999991px;background:#8cf6b6"></div>
<div style="position:absolute;left:2122.0px;top:1109.2px;width:157.5px;height:78.59999999999991px;background:#8cf6b6"></div>
<div style="position:absolute;left:2279.5px;top:1109.2px;width:157.5px;height:78.59999999999991px;background:#8cf6b6"></div>
<div style="position:absolute;left:2437px;top:1109.2px;width:19.5px;height:78.59999999999991px;background:#8cf6b6"></div>
<div style="position:absolute;left:1019px;top:1109.2px;width:1px;height:78.59999999999991px;background:rgba(226,232,240,0.95)"></div>
<div style="position:absolute;left:1177px;top:1109.2px;width:1px;height:78.59999999999991px;background:rgba(226,232,240,0.95)"></div>
<div style="position:absolute;left:1334px;top:1109.2px;width:1px;height:78.59999999999991px;background:rgba(226,232,240,0.95)"></div>
<div style="position:absolute;left:1492px;top:1109.2px;width:1px;height:78.59999999999991px;background:rgba(226,232,240,0.95)"></div>
<div style="position:absolute;left:1649px;top:1109.2px;width:1px;height:78.59999999999991px;background:rgba(226,232,240,0.95)"></div>
<div style="position:absolute;left:1807px;top:1109.2px;width:1px;height:78.59999999999991px;background:rgba(226,232,240,0.95)"></div>
<div style="position:absolute;left:1964px;top:1109.2px;width:1px;height:78.59999999999991px;background:rgba(226,232,240,0.95)"></div>
<div style="position:absolute;left:2122px;top:1109.2px;width:1px;height:78.59999999999991px;background:rgba(226,232,240,0.95)"></div>
<div style="position:absolute;left:2279px;top:1109.2px;width:1px;height:78.59999999999991px;background:rgba(226,232,240,0.95)"></div>
<div style="position:absolute;left:2437px;top:1109.2px;width:1px;height:78.59999999999991px;background:rgba(226,232,240,0.95)"></div>
<div style="position:absolute;left:128.25px;top:1109px;width:2328.25px;height:1px;background:#e9eaee"></div>
<div id="kw2" class="t" style="left:142.60px;top:1137.73px;font-size:23.5px;line-height:23.5px;color:#64748b;font-weight:400;letter-spacing:-0.370px;">Парсинг частотности wordstat</div>
<div class="t" style="left:705px;width:157px;text-align:center;top:1140.08px;font-size:22.5px;line-height:22.5px;color:#64748b">1</div>
<div class="t" style="left:906.00px;top:1140.08px;font-size:22.5px;line-height:22.5px;color:#64748b">1</div>
<div class="t" style="left:1063.50px;top:1140.08px;font-size:22.5px;line-height:22.5px;color:#64748b">1</div>
<div class="t" style="left:1221.00px;top:1140.08px;font-size:22.5px;line-height:22.5px;color:#64748b">1</div>
<div class="t" style="left:1378.50px;top:1140.08px;font-size:22.5px;line-height:22.5px;color:#64748b">1<span style="font-size:19px;color:#10b981;position:relative;top:-10.5px;margin-left:15.9px">+1</span></div>
<div class="t" style="left:1536.00px;top:1140.08px;font-size:22.5px;line-height:22.5px;color:#64748b">2</div>
<div class="t" style="left:1693.50px;top:1140.08px;font-size:22.5px;line-height:22.5px;color:#64748b">2<span style="font-size:19px;color:#ef4444;position:relative;top:-10.5px;margin-left:15.9px">-1</span></div>
<div class="t" style="left:1851.00px;top:1140.08px;font-size:22.5px;line-height:22.5px;color:#64748b">1<span style="font-size:19px;color:#10b981;position:relative;top:-10.5px;margin-left:15.9px">+1</span></div>
<div class="t" style="left:2008.50px;top:1140.08px;font-size:22.5px;line-height:22.5px;color:#64748b">2</div>
<div class="t" style="left:2166.00px;top:1140.08px;font-size:22.5px;line-height:22.5px;color:#64748b">2</div>
<div class="t" style="left:2323.50px;top:1140.08px;font-size:22.5px;line-height:22.5px;color:#64748b">2<span style="font-size:19px;color:#10b981;position:relative;top:-10.5px;margin-left:15.9px">+1</span></div>
<div style="position:absolute;left:128.25px;top:1187.8px;width:733.75px;height:78.59999999999991px;background:#fafafa"></div>
<div style="position:absolute;left:705px;top:1187.8px;width:1px;height:78.59999999999991px;background:#e7e8ec"></div>
<div style="position:absolute;left:862.0px;top:1187.8px;width:157.5px;height:78.59999999999991px;background:#ccfde4"></div>
<div style="position:absolute;left:1019.5px;top:1187.8px;width:157.5px;height:78.59999999999991px;background:#ccfde4"></div>
<div style="position:absolute;left:1177.0px;top:1187.8px;width:157.5px;height:78.59999999999991px;background:#ccfde4"></div>
<div style="position:absolute;left:1334.5px;top:1187.8px;width:157.5px;height:78.59999999999991px;background:#ccfde4"></div>
<div style="position:absolute;left:1492.0px;top:1187.8px;width:157.5px;height:78.59999999999991px;background:#ccfde4"></div>
<div style="position:absolute;left:1649.5px;top:1187.8px;width:157.5px;height:78.59999999999991px;background:#ccfde4"></div>
<div style="position:absolute;left:1807.0px;top:1187.8px;width:157.5px;height:78.59999999999991px;background:#ccfde4"></div>
<div style="position:absolute;left:1964.5px;top:1187.8px;width:157.5px;height:78.59999999999991px;background:#ccfde4"></div>
<div style="position:absolute;left:2122.0px;top:1187.8px;width:157.5px;height:78.59999999999991px;background:#ccfde4"></div>
<div style="position:absolute;left:2279.5px;top:1187.8px;width:157.5px;height:78.59999999999991px;background:#ccfde4"></div>
<div style="position:absolute;left:2437px;top:1187.8px;width:19.5px;height:78.59999999999991px;background:#ccfde4"></div>
<div style="position:absolute;left:1019px;top:1187.8px;width:1px;height:78.59999999999991px;background:rgba(226,232,240,0.95)"></div>
<div style="position:absolute;left:1177px;top:1187.8px;width:1px;height:78.59999999999991px;background:rgba(226,232,240,0.95)"></div>
<div style="position:absolute;left:1334px;top:1187.8px;width:1px;height:78.59999999999991px;background:rgba(226,232,240,0.95)"></div>
<div style="position:absolute;left:1492px;top:1187.8px;width:1px;height:78.59999999999991px;background:rgba(226,232,240,0.95)"></div>
<div style="position:absolute;left:1649px;top:1187.8px;width:1px;height:78.59999999999991px;background:rgba(226,232,240,0.95)"></div>
<div style="position:absolute;left:1807px;top:1187.8px;width:1px;height:78.59999999999991px;background:rgba(226,232,240,0.95)"></div>
<div style="position:absolute;left:1964px;top:1187.8px;width:1px;height:78.59999999999991px;background:rgba(226,232,240,0.95)"></div>
<div style="position:absolute;left:2122px;top:1187.8px;width:1px;height:78.59999999999991px;background:rgba(226,232,240,0.95)"></div>
<div style="position:absolute;left:2279px;top:1187.8px;width:1px;height:78.59999999999991px;background:rgba(226,232,240,0.95)"></div>
<div style="position:absolute;left:2437px;top:1187.8px;width:1px;height:78.59999999999991px;background:rgba(226,232,240,0.95)"></div>
<div style="position:absolute;left:128.25px;top:1188px;width:2328.25px;height:1px;background:#e9eaee"></div>
<div id="kw3" class="t" style="left:142.60px;top:1216.33px;font-size:23.5px;line-height:23.5px;color:#64748b;font-weight:400;letter-spacing:-0.656px;">Парсер яндекс вордстат</div>
<div class="t" style="left:705px;width:157px;text-align:center;top:1218.67px;font-size:22.5px;line-height:22.5px;color:#64748b">3</div>
<div class="t" style="left:906.00px;top:1218.67px;font-size:22.5px;line-height:22.5px;color:#64748b">6<span style="font-size:19px;color:#10b981;position:relative;top:-10.5px;margin-left:15.9px">+1</span></div>
<div class="t" style="left:1063.50px;top:1218.67px;font-size:22.5px;line-height:22.5px;color:#64748b">7</div>
<div class="t" style="left:1221.00px;top:1218.67px;font-size:22.5px;line-height:22.5px;color:#64748b">7<span style="font-size:19px;color:#10b981;position:relative;top:-10.5px;margin-left:15.9px">+2</span></div>
<div class="t" style="left:1378.50px;top:1218.67px;font-size:22.5px;line-height:22.5px;color:#64748b">9<span style="font-size:19px;color:#ef4444;position:relative;top:-10.5px;margin-left:15.9px">-2</span></div>
<div class="t" style="left:1536.00px;top:1218.67px;font-size:22.5px;line-height:22.5px;color:#64748b">7<span style="font-size:19px;color:#10b981;position:relative;top:-10.5px;margin-left:15.9px">+3</span></div>
<div class="t" style="left:1693.50px;top:1218.67px;font-size:22.5px;line-height:22.5px;color:#64748b">10<span style="font-size:19px;color:#ef4444;position:relative;top:-10.5px;margin-left:15.9px">-3</span></div>
<div class="t" style="left:1851.00px;top:1218.67px;font-size:22.5px;line-height:22.5px;color:#64748b">7</div>
<div class="t" style="left:2008.50px;top:1218.67px;font-size:22.5px;line-height:22.5px;color:#64748b">7</div>
<div class="t" style="left:2166.00px;top:1218.67px;font-size:22.5px;line-height:22.5px;color:#64748b">7</div>
<div class="t" style="left:2323.50px;top:1218.67px;font-size:22.5px;line-height:22.5px;color:#64748b">7<span style="font-size:19px;color:#10b981;position:relative;top:-10.5px;margin-left:15.9px">+1</span></div>
<div style="position:absolute;left:128.25px;top:1266.4px;width:733.75px;height:78.59999999999991px;background:#ffffff"></div>
<div style="position:absolute;left:705px;top:1266.4px;width:1px;height:78.59999999999991px;background:#e7e8ec"></div>
<div style="position:absolute;left:862.0px;top:1266.4px;width:157.5px;height:78.59999999999991px;background:#8cf6b6"></div>
<div style="position:absolute;left:1019.5px;top:1266.4px;width:157.5px;height:78.59999999999991px;background:#8cf6b6"></div>
<div style="position:absolute;left:1177.0px;top:1266.4px;width:157.5px;height:78.59999999999991px;background:#ccfde4"></div>
<div style="position:absolute;left:1334.5px;top:1266.4px;width:157.5px;height:78.59999999999991px;background:#8cf6b6"></div>
<div style="position:absolute;left:1492.0px;top:1266.4px;width:157.5px;height:78.59999999999991px;background:#8cf6b6"></div>
<div style="position:absolute;left:1649.5px;top:1266.4px;width:157.5px;height:78.59999999999991px;background:#ccfde4"></div>
<div style="position:absolute;left:1807.0px;top:1266.4px;width:157.5px;height:78.59999999999991px;background:#ccfde4"></div>
<div style="position:absolute;left:1964.5px;top:1266.4px;width:157.5px;height:78.59999999999991px;background:#8cf6b6"></div>
<div style="position:absolute;left:2122.0px;top:1266.4px;width:157.5px;height:78.59999999999991px;background:#8cf6b6"></div>
<div style="position:absolute;left:2279.5px;top:1266.4px;width:157.5px;height:78.59999999999991px;background:#ccfde4"></div>
<div style="position:absolute;left:2437px;top:1266.4px;width:19.5px;height:78.59999999999991px;background:#ccfde4"></div>
<div style="position:absolute;left:1019px;top:1266.4px;width:1px;height:78.59999999999991px;background:rgba(226,232,240,0.95)"></div>
<div style="position:absolute;left:1177px;top:1266.4px;width:1px;height:78.59999999999991px;background:rgba(226,232,240,0.95)"></div>
<div style="position:absolute;left:1334px;top:1266.4px;width:1px;height:78.59999999999991px;background:rgba(226,232,240,0.95)"></div>
<div style="position:absolute;left:1492px;top:1266.4px;width:1px;height:78.59999999999991px;background:rgba(226,232,240,0.95)"></div>
<div style="position:absolute;left:1649px;top:1266.4px;width:1px;height:78.59999999999991px;background:rgba(226,232,240,0.95)"></div>
<div style="position:absolute;left:1807px;top:1266.4px;width:1px;height:78.59999999999991px;background:rgba(226,232,240,0.95)"></div>
<div style="position:absolute;left:1964px;top:1266.4px;width:1px;height:78.59999999999991px;background:rgba(226,232,240,0.95)"></div>
<div style="position:absolute;left:2122px;top:1266.4px;width:1px;height:78.59999999999991px;background:rgba(226,232,240,0.95)"></div>
<div style="position:absolute;left:2279px;top:1266.4px;width:1px;height:78.59999999999991px;background:rgba(226,232,240,0.95)"></div>
<div style="position:absolute;left:2437px;top:1266.4px;width:1px;height:78.59999999999991px;background:rgba(226,232,240,0.95)"></div>
<div style="position:absolute;left:128.25px;top:1266px;width:2328.25px;height:1px;background:#e9eaee"></div>
<div id="kw4" class="t" style="left:142.60px;top:1294.93px;font-size:23.5px;line-height:23.5px;color:#64748b;font-weight:400;letter-spacing:-0.574px;">Парсинг вордстат</div>
<div class="t" style="left:705px;width:157px;text-align:center;top:1297.28px;font-size:22.5px;line-height:22.5px;color:#64748b">13</div>
<div class="t" style="left:906.00px;top:1297.28px;font-size:22.5px;line-height:22.5px;color:#64748b">3</div>
<div class="t" style="left:1063.50px;top:1297.28px;font-size:22.5px;line-height:22.5px;color:#64748b">3<span style="font-size:19px;color:#10b981;position:relative;top:-10.5px;margin-left:15.9px">+1</span></div>
<div class="t" style="left:1221.00px;top:1297.28px;font-size:22.5px;line-height:22.5px;color:#64748b">4<span style="font-size:19px;color:#ef4444;position:relative;top:-10.5px;margin-left:15.9px">-1</span></div>
<div class="t" style="left:1378.50px;top:1297.28px;font-size:22.5px;line-height:22.5px;color:#64748b">3</div>
<div class="t" style="left:1536.00px;top:1297.28px;font-size:22.5px;line-height:22.5px;color:#64748b">3<span style="font-size:19px;color:#10b981;position:relative;top:-10.5px;margin-left:15.9px">+6</span></div>
<div class="t" style="left:1693.50px;top:1297.28px;font-size:22.5px;line-height:22.5px;color:#64748b">9<span style="font-size:19px;color:#ef4444;position:relative;top:-10.5px;margin-left:15.9px">-3</span></div>
<div class="t" style="left:1851.00px;top:1297.28px;font-size:22.5px;line-height:22.5px;color:#64748b">6<span style="font-size:19px;color:#ef4444;position:relative;top:-10.5px;margin-left:15.9px">-3</span></div>
<div class="t" style="left:2008.50px;top:1297.28px;font-size:22.5px;line-height:22.5px;color:#64748b">3</div>
<div class="t" style="left:2166.00px;top:1297.28px;font-size:22.5px;line-height:22.5px;color:#64748b">3<span style="font-size:19px;color:#10b981;position:relative;top:-10.5px;margin-left:15.9px">+3</span></div>
<div class="t" style="left:2323.50px;top:1297.28px;font-size:22.5px;line-height:22.5px;color:#64748b">6<span style="font-size:19px;color:#ef4444;position:relative;top:-10.5px;margin-left:15.9px">-2</span></div>
<div style="position:absolute;left:128.25px;top:1345.0px;width:733.75px;height:78.59999999999991px;background:#fafafa"></div>
<div style="position:absolute;left:705px;top:1345.0px;width:1px;height:78.59999999999991px;background:#e7e8ec"></div>
<div style="position:absolute;left:862.0px;top:1345.0px;width:157.5px;height:78.59999999999991px;background:#8cf6b6"></div>
<div style="position:absolute;left:1019.5px;top:1345.0px;width:157.5px;height:78.59999999999991px;background:#8cf6b6"></div>
<div style="position:absolute;left:1177.0px;top:1345.0px;width:157.5px;height:78.59999999999991px;background:#8cf6b6"></div>
<div style="position:absolute;left:1334.5px;top:1345.0px;width:157.5px;height:78.59999999999991px;background:#8cf6b6"></div>
<div style="position:absolute;left:1492.0px;top:1345.0px;width:157.5px;height:78.59999999999991px;background:#8cf6b6"></div>
<div style="position:absolute;left:1649.5px;top:1345.0px;width:157.5px;height:78.59999999999991px;background:#8cf6b6"></div>
<div style="position:absolute;left:1807.0px;top:1345.0px;width:157.5px;height:78.59999999999991px;background:#8cf6b6"></div>
<div style="position:absolute;left:1964.5px;top:1345.0px;width:157.5px;height:78.59999999999991px;background:#8cf6b6"></div>
<div style="position:absolute;left:2122.0px;top:1345.0px;width:157.5px;height:78.59999999999991px;background:#8cf6b6"></div>
<div style="position:absolute;left:2279.5px;top:1345.0px;width:157.5px;height:78.59999999999991px;background:#8cf6b6"></div>
<div style="position:absolute;left:2437px;top:1345.0px;width:19.5px;height:78.59999999999991px;background:#8cf6b6"></div>
<div style="position:absolute;left:1019px;top:1345.0px;width:1px;height:78.59999999999991px;background:rgba(226,232,240,0.95)"></div>
<div style="position:absolute;left:1177px;top:1345.0px;width:1px;height:78.59999999999991px;background:rgba(226,232,240,0.95)"></div>
<div style="position:absolute;left:1334px;top:1345.0px;width:1px;height:78.59999999999991px;background:rgba(226,232,240,0.95)"></div>
<div style="position:absolute;left:1492px;top:1345.0px;width:1px;height:78.59999999999991px;background:rgba(226,232,240,0.95)"></div>
<div style="position:absolute;left:1649px;top:1345.0px;width:1px;height:78.59999999999991px;background:rgba(226,232,240,0.95)"></div>
<div style="position:absolute;left:1807px;top:1345.0px;width:1px;height:78.59999999999991px;background:rgba(226,232,240,0.95)"></div>
<div style="position:absolute;left:1964px;top:1345.0px;width:1px;height:78.59999999999991px;background:rgba(226,232,240,0.95)"></div>
<div style="position:absolute;left:2122px;top:1345.0px;width:1px;height:78.59999999999991px;background:rgba(226,232,240,0.95)"></div>
<div style="position:absolute;left:2279px;top:1345.0px;width:1px;height:78.59999999999991px;background:rgba(226,232,240,0.95)"></div>
<div style="position:absolute;left:2437px;top:1345.0px;width:1px;height:78.59999999999991px;background:rgba(226,232,240,0.95)"></div>
<div style="position:absolute;left:128.25px;top:1345px;width:2328.25px;height:1px;background:#e9eaee"></div>
<div id="kw5" class="t" style="left:142.60px;top:1373.53px;font-size:23.5px;line-height:23.5px;color:#64748b;font-weight:400;letter-spacing:-0.600px;">Чем снять частотность запросов</div>
<div class="t" style="left:705px;width:157px;text-align:center;top:1375.88px;font-size:22.5px;line-height:22.5px;color:#64748b">8</div>
<div class="t" style="left:906.00px;top:1375.88px;font-size:22.5px;line-height:22.5px;color:#64748b">1</div>
<div class="t" style="left:1063.50px;top:1375.88px;font-size:22.5px;line-height:22.5px;color:#64748b">1</div>
<div class="t" style="left:1221.00px;top:1375.88px;font-size:22.5px;line-height:22.5px;color:#64748b">1</div>
<div class="t" style="left:1378.50px;top:1375.88px;font-size:22.5px;line-height:22.5px;color:#64748b">1</div>
<div class="t" style="left:1536.00px;top:1375.88px;font-size:22.5px;line-height:22.5px;color:#64748b">1</div>
<div class="t" style="left:1693.50px;top:1375.88px;font-size:22.5px;line-height:22.5px;color:#64748b">1</div>
<div class="t" style="left:1851.00px;top:1375.88px;font-size:22.5px;line-height:22.5px;color:#64748b">1</div>
<div class="t" style="left:2008.50px;top:1375.88px;font-size:22.5px;line-height:22.5px;color:#64748b">1</div>
<div class="t" style="left:2166.00px;top:1375.88px;font-size:22.5px;line-height:22.5px;color:#64748b">1</div>
<div class="t" style="left:2323.50px;top:1375.88px;font-size:22.5px;line-height:22.5px;color:#64748b">1</div>
</div>
</body></html>
